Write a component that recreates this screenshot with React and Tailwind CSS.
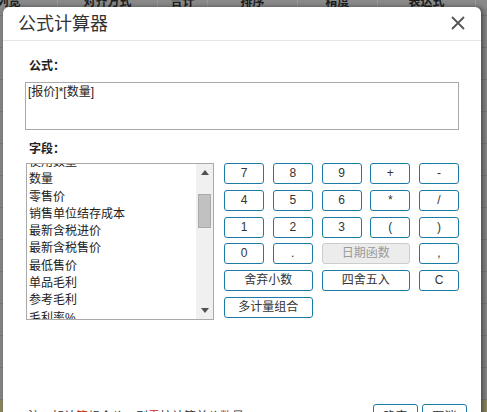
import React from "react";

const FONT = { fontFamily: '"Liberation Sans", Arial, "Noto Sans CJK SC", sans-serif' };

const fields = ["使用数量", "数量", "零售价", "销售单位结存成本", "最新含税进价", "最新含税售价", "最低售价", "单品毛利", "参考毛利", "毛利率%"];

function Btn({ children, span = 1, disabled = false }) {
  const base = "h-[21px] rounded-[3px] border text-[12px] leading-[19px] flex items-center justify-center";
  const cls = disabled
    ? "border-[#cccccc] bg-[#ececec] text-[#9a9a9a]"
    : "border-[#1c7ba6] bg-white text-[#333333]";
  return <div className={`${base} ${cls} ${span === 2 ? "col-span-2" : ""}`}>{children}</div>;
}

export default function App() {
  const cols = [
    { w: 98, t: "列宽", ml: -40 },
    { w: 100, t: "对齐方式" },
    { w: 50, t: "合计" },
    { w: 90, t: "排序" },
    { w: 80, t: "精度" },
    { w: 98, t: "表达式" },
    { w: 60, t: "" },
  ];
  return (
    <div className="relative w-[487px] h-[412px] overflow-hidden bg-[#858585]" style={FONT}>
      {/* background table (dimmed) */}
      <div className="flex h-[8px] bg-[#8a8a8a]">
        {cols.map((c, i) => (
          <div
            key={i}
            className="shrink-0 h-[8px] border-r border-[#9a9a9a] flex items-end justify-center text-[12px] leading-[12px] font-bold text-[#1e1e1e] overflow-hidden"
            style={{ width: c.w, marginLeft: c.ml || 0 }}
          >
            <span className="shrink-0">{c.t}</span>
          </div>
        ))}
      </div>
      <div className="flex flex-col">
        <div className="h-[8px] border-b border-[#777777]" />
        {Array.from({ length: 13 }).map((_, i) => (
          <div key={i} className={`h-[32px] border-b border-[#777777] ${i === 12 ? "bg-[#8a8660]" : ""}`} />
        ))}
      </div>

      {/* dialog */}
      <div className="absolute left-[3px] top-[7px] w-[478px] h-[430px] bg-white rounded-t-[6px] shadow-[2px_0_5px_rgba(0,0,0,0.45)]">
        <div className="h-[34px] border-b border-[#e5e5e5] flex items-center justify-between pl-[15px] pr-[16px]">
          <span className="text-[18px] leading-[24px] text-[#333333]">公式计算器</span>
          <svg width="14" height="14" viewBox="0 0 14 14" className="mt-[-2px]">
            <path d="M1 1 L13 13 M13 1 L1 13" stroke="#555555" strokeWidth="1.8" fill="none" />
          </svg>
        </div>

        <div className="px-[22px]">
          <div className="pt-[17px] pl-[4px] text-[12px] font-bold leading-[17px] text-[#222222]">公式：</div>
          <div className="mt-[7px] h-[48px] border border-[#a9a9a9] px-[2px] pt-[1px] text-[12px] leading-[17px] text-[#222222]">
            [报价]*[数量]
          </div>
          <div className="mt-[11px] pl-[4px] text-[12px] font-bold leading-[17px] text-[#222222]">字段：</div>

          <div className="mt-[5px] flex items-start">
            {/* list box */}
            <div className="ml-[1px] w-[189px] h-[157px] border border-[#a9a9a9] flex overflow-hidden">
              <div className="flex-1 overflow-hidden pl-[2px]">
                <div className="-mt-[10px] flex flex-col">
                  {fields.map((f) => (
                    <div key={f} className="h-[17.3px] text-[12px] leading-[17px] text-[#222222] whitespace-nowrap">
                      {f}
                    </div>
                  ))}
                </div>
              </div>
              <div className="w-[17px] bg-[#f0f0f0] flex flex-col items-center">
                <div className="h-[17px] flex items-center justify-center">
                  <svg width="8" height="5" viewBox="0 0 8 5"><path d="M0 5 L4 0 L8 5 Z" fill="#505050" /></svg>
                </div>
                <div className="mt-[13px] w-[13px] h-[34px] bg-[#c1c1c1] border border-[#a9a9a9]" />
                <div className="flex-1" />
                <div className="h-[17px] flex items-center justify-center">
                  <svg width="8" height="5" viewBox="0 0 8 5"><path d="M0 0 L4 5 L8 0 Z" fill="#505050" /></svg>
                </div>
              </div>
            </div>

            {/* keypad */}
            <div className="ml-[10px] grid grid-cols-[repeat(5,40px)] gap-x-[8.75px] gap-y-[5.8px]">
              <Btn>7</Btn><Btn>8</Btn><Btn>9</Btn><Btn>+</Btn><Btn>-</Btn>
              <Btn>4</Btn><Btn>5</Btn><Btn>6</Btn><Btn>*</Btn><Btn>/</Btn>
              <Btn>1</Btn><Btn>2</Btn><Btn>3</Btn><Btn>(</Btn><Btn>)</Btn>
              <Btn>0</Btn><Btn>.</Btn><Btn span={2} disabled>日期函数</Btn><Btn>,</Btn>
              <Btn span={2}>舍弃小数</Btn><Btn span={2}>四舍五入</Btn><Btn>C</Btn>
              <Btn span={2}>多计量组合</Btn>
            </div>
          </div>
        </div>

        {/* footer */}
        <div className="mt-[84px] flex items-start justify-between pl-[25px] pr-[14px]">
          <div className="mt-[5px] text-[12px] leading-[17px] text-[#333333] whitespace-nowrap">
            注：如计<span className="text-[#cc2200]">算</span>组合价，则<span className="text-[#cc2200]">需</span>按计算单价<span className="text-[#cc2200]">数</span>量<span className="text-[#cc2200]">。</span>
          </div>
          <div className="flex gap-[4px]">
            <div className="w-[45px] h-[26px] rounded-[3px] border border-[#1c7ba6] flex items-center justify-center text-[12px] text-[#333333]">确定</div>
            <div className="w-[45px] h-[26px] rounded-[3px] border border-[#1c7ba6] flex items-center justify-center text-[12px] text-[#333333]">取消</div>
          </div>
        </div>
      </div>
    </div>
  );
}
